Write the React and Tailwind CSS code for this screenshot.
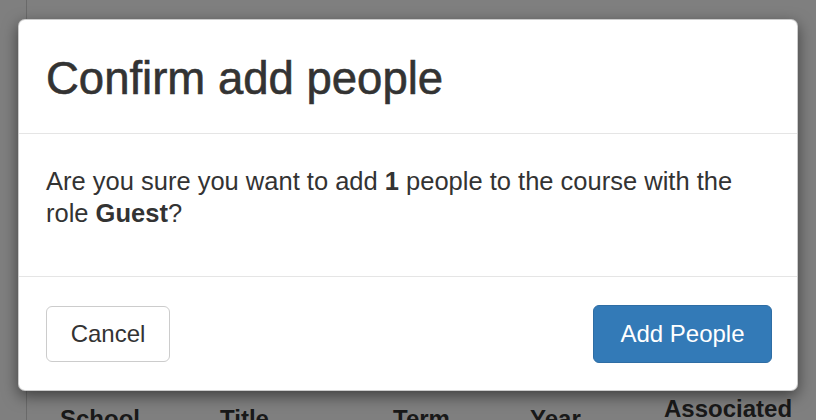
export default function App() {
  const headers = [
    { label: 'School', className: 'w-[160px] pt-[10px]' },
    { label: 'Title', className: 'w-[173px] pt-[10px]' },
    { label: 'Term', className: 'w-[137px] pt-[10px]' },
    { label: 'Year', className: 'w-[134px] pt-[10px]' },
    { label: 'Associated', className: 'flex-1' },
  ];

  return (
    <div className="relative h-[420px] w-[816px] overflow-hidden bg-white font-['Liberation_Sans',Arial,sans-serif] text-[#333]">
      {/* page behind the dialog */}
      <div className="flex h-full flex-col pl-[26px]">
        <div className="flex flex-1 flex-col border-l border-[#d4d4d4]">
          <div className="flex-1" />
          <div className="flex h-[25px] items-start pl-[33px] text-[24px] font-bold leading-[28px] text-[#333]">
            {headers.map((h) => (
              <div key={h.label} className={h.className}>{h.label}</div>
            ))}
          </div>
        </div>
      </div>

      {/* backdrop */}
      <div className="absolute inset-0 bg-black/50" />

      {/* dialog */}
      <div className="absolute left-[18px] top-[19px] w-[780px] rounded-[7px] border border-black/20 bg-white shadow-[0_5px_15px_rgba(0,0,0,0.5)]">
        <div className="flex h-[114px] items-center border-b border-[#e5e5e5] px-[27px] pt-[5px]">
          <h3 className="text-[45.5px] leading-[50px] text-[#333] [-webkit-text-stroke:0.6px_#333]">Confirm add people</h3>
        </div>

        <div className="h-[142px] px-[27px] pt-[31px] text-[25.5px] leading-[32px]">
          Are you sure you want to add <b>1</b> people to the course with the role <b>Guest</b>?
        </div>

        <div className="flex h-[114px] items-center justify-between border-t border-[#e5e5e5] pl-[27px] pr-[25px]">
          <button type="button" className="h-[56px] w-[124px] rounded-[6px] border border-[#ccc] bg-white text-[24px] text-[#333]">
            Cancel
          </button>
          <button type="button" className="h-[58px] w-[179px] rounded-[6px] border border-[#2e6da4] bg-[#337ab7] text-[24px] text-white">
            Add People
          </button>
        </div>
      </div>
    </div>
  );
}
